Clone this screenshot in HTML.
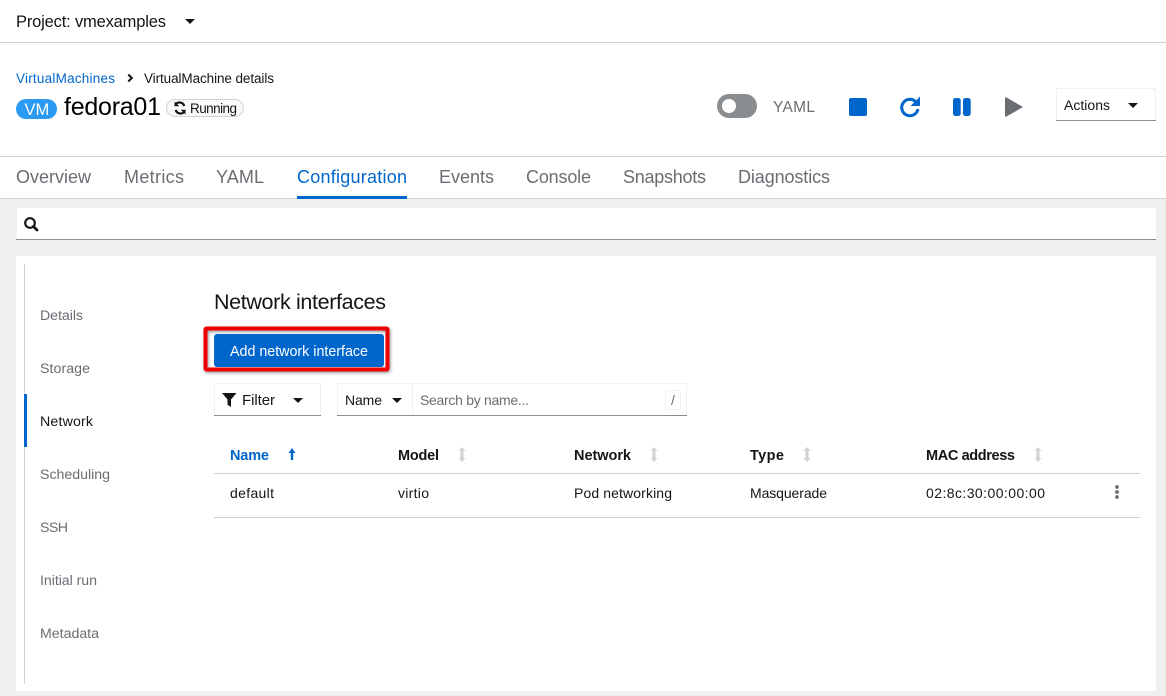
<!DOCTYPE html>
<html><head><meta charset="utf-8"><title>fedora01</title>
<style>
html,body{margin:0;padding:0;background:#fff;width:1166px;height:696px;overflow:hidden}
svg{display:block}
text{font-family:"Liberation Sans",sans-serif;font-size:14px;fill:#151515}
.g{fill:#6a6e73}.b{fill:#0066cc}.h{font-weight:700;font-size:14.500px}
.t{font-size:18px;fill:#6a6e73}.s{font-size:14.200px}
</style></head><body>
<svg width="1166" height="696" viewBox="0 0 1166 696" xmlns="http://www.w3.org/2000/svg">
<defs><filter id="sh" x="-10%" y="-30%" width="120%" height="160%"><feDropShadow dx="1" dy="1.500" stdDeviation="1.500" flood-color="#000" flood-opacity=".4"/></filter></defs>
<rect width="1166" height="696" fill="#fff"/>
<text x="16" y="27" style="font-size:16.500px" textLength="150" lengthAdjust="spacing">Project: vmexamples</text>
<path d="M185 19h10l-5 5z" fill="#151515"/>
<rect y="42" width="1166" height="1" fill="#d2d2d2"/>

<text x="16" y="83" class="b" style="font-size:13.500px" textLength="99" lengthAdjust="spacing">VirtualMachines</text>
<path d="M128.300 74.500l3.500 3.500-3.500 3.500" fill="none" stroke="#151515" stroke-width="2"/>
<text x="144" y="83" style="font-size:13.500px" textLength="130" lengthAdjust="spacing">VirtualMachine details</text>
<rect x="16" y="99" width="41" height="20" rx="10" fill="#2b9af3"/>
<text x="24.500" y="115" style="font-size:16.500px;fill:#fff">VM</text>
<text x="64" y="115" style="font-size:25px;fill:#000" textLength="97" lengthAdjust="spacing">fedora01</text>
<rect x="166.500" y="99.500" width="77" height="17" rx="8.500" fill="#fafafa" stroke="#d2d2d2"/>
<g fill="none" stroke="#151515" stroke-width="2.200">
<path d="M184.300 106a5 5 0 0 0-8.800-1.500"/><path d="M175.700 110a5 5 0 0 0 8.800 1.500"/>
</g>
<path d="M174.500 101.500v4.800h4.800zM185.500 114.500v-4.800h-4.800z" fill="#151515"/>
<text x="190" y="113" style="font-size:13.500px" textLength="47" lengthAdjust="spacing">Running</text>

<rect x="717" y="94" width="40" height="24" rx="12" fill="#8a8d90"/>
<circle cx="729" cy="106" r="7" fill="#fff"/>
<text x="773" y="112" class="g" style="font-size:15.500px" textLength="42" lengthAdjust="spacing">YAML</text>
<rect x="849" y="98" width="18" height="18" rx="2" fill="#0066cc"/>
<path d="M915.500 101.500a8.200 8.200 0 1 0 2.500 7.500" fill="none" stroke="#0066cc" stroke-width="3"/>
<path d="M920 96.500v9.500h-9.500z" fill="#0066cc"/>
<rect x="953" y="98" width="7.700" height="18" rx="2.500" fill="#0066cc"/>
<rect x="963" y="98" width="7.700" height="18" rx="2.500" fill="#0066cc"/>
<path d="M1006.500 97.500c-.8-.4-1.500 0-1.500 1v17c0 1 .7 1.400 1.500 1l16.500-9.500z" fill="#6a6e73"/>
<rect x="1056.500" y="88.500" width="99" height="32" fill="#fff" stroke="#f0f0f0"/>
<rect x="1056" y="120" width="100" height="1" fill="#8a8d90"/>
<text x="1064" y="110" textLength="46" lengthAdjust="spacing">Actions</text>
<path d="M1128 103h10l-5 5z" fill="#151515"/>

<rect y="156" width="1166" height="1" fill="#d2d2d2"/>
<text x="16" y="183" class="t" textLength="75" lengthAdjust="spacing">Overview</text>
<text x="124" y="183" class="t" textLength="60" lengthAdjust="spacing">Metrics</text>
<text x="216" y="183" class="t" textLength="48" lengthAdjust="spacing">YAML</text>
<text x="297" y="183" class="t" style="fill:#0066cc" textLength="110" lengthAdjust="spacing">Configuration</text>
<text x="439" y="183" class="t" textLength="55" lengthAdjust="spacing">Events</text>
<text x="526" y="183" class="t" textLength="65" lengthAdjust="spacing">Console</text>
<text x="623" y="183" class="t" textLength="83" lengthAdjust="spacing">Snapshots</text>
<text x="738" y="183" class="t" textLength="92" lengthAdjust="spacing">Diagnostics</text>

<rect y="198" width="1166" height="498" fill="#f0f0f0"/>
<rect y="198" width="1166" height="1" fill="#d2d2d2"/>
<rect x="297" y="196" width="110" height="3" fill="#0066cc"/>
<rect x="17" y="208" width="1139" height="31" fill="#fff"/>
<rect x="16" y="239" width="1140" height="1" fill="#8a8d90"/>
<circle cx="30" cy="223" r="4.800" fill="none" stroke="#151515" stroke-width="2.200"/>
<path d="M33.500 226.500l3.500 3.500" stroke="#151515" stroke-width="2.800" stroke-linecap="round"/>

<rect x="16" y="256" width="1140" height="435" fill="#fff"/>
<rect x="24" y="264" width="1" height="420" fill="#d2d2d2"/>
<rect x="24" y="394" width="3" height="53" fill="#0066cc"/>
<text x="40" y="320" class="g s" textLength="43" lengthAdjust="spacing">Details</text>
<text x="40" y="373" class="g s" textLength="50" lengthAdjust="spacing">Storage</text>
<text x="40" y="426" class="s" textLength="53" lengthAdjust="spacing">Network</text>
<text x="40" y="479" class="g s" textLength="70" lengthAdjust="spacing">Scheduling</text>
<text x="40" y="532" class="g s" textLength="28" lengthAdjust="spacing">SSH</text>
<text x="40" y="585" class="g s" textLength="57" lengthAdjust="spacing">Initial run</text>
<text x="40" y="638" class="g s" textLength="59" lengthAdjust="spacing">Metadata</text>

<text x="214" y="309" style="font-size:21.500px" textLength="172" lengthAdjust="spacing">Network interfaces</text>
<rect x="205.500" y="328.500" width="182" height="41" rx="1" fill="none" stroke="#ee0000" stroke-width="4" filter="url(#sh)"/>
<rect x="214" y="334" width="170" height="33" rx="3" fill="#0066cc"/>
<text x="230" y="356" style="fill:#fff;font-size:14.300px" textLength="138" lengthAdjust="spacing">Add network interface</text>

<rect x="214.500" y="383.500" width="106" height="32" fill="#fff" stroke="#f0f0f0"/>
<rect x="214" y="415" width="107" height="1" fill="#8a8d90"/>
<path d="M222 393h14.500l-5.500 6.500v7.500l-3.500-2.300v-5.200z" fill="#151515"/>
<text x="242" y="405" style="font-size:15px" textLength="33" lengthAdjust="spacing">Filter</text>
<path d="M293 398h10l-5 5z" fill="#151515"/>
<rect x="337.500" y="383.500" width="349" height="32" fill="#fff" stroke="#f0f0f0"/>
<rect x="412" y="384" width="1" height="31" fill="#f0f0f0"/>
<rect x="337" y="415" width="350" height="1" fill="#8a8d90"/>
<text x="345" y="405" textLength="37" lengthAdjust="spacing">Name</text>
<path d="M392 398h10l-5 5z" fill="#151515"/>
<text x="420" y="405" class="g" textLength="109" lengthAdjust="spacing">Search by name...</text>
<rect x="665.500" y="390.500" width="15" height="19" rx="2" fill="#fff" stroke="#f0f0f0"/>
<text x="673" y="405" class="g" text-anchor="middle">/</text>

<text x="230" y="460" class="h b" textLength="39" lengthAdjust="spacing">Name</text>
<path d="M292 448l3.500 5h-2.300v7h-2.400v-7h-2.300z" fill="#0066cc"/>
<text x="398" y="460" class="h" textLength="41" lengthAdjust="spacing">Model</text>
<text x="574" y="460" class="h" textLength="57" lengthAdjust="spacing">Network</text>
<text x="750" y="460" class="h" textLength="34" lengthAdjust="spacing">Type</text>
<text x="926" y="460" class="h" textLength="89" lengthAdjust="spacing">MAC address</text>
<g fill="#d2d2d2">
<path d="M462 447l3.500 4H463.500v7h2l-3.500 4-3.500-4h2v-7h-2z"/>
<path d="M654 447l3.500 4H655.500v7h2l-3.500 4-3.500-4h2v-7h-2z"/>
<path d="M807 447l3.500 4H808.500v7h2l-3.500 4-3.500-4h2v-7h-2z"/>
<path d="M1038 447l3.500 4H1039.500v7h2l-3.500 4-3.500-4h2v-7h-2z"/>
</g>
<rect x="214" y="473" width="926" height="1" fill="#d2d2d2"/>
<text x="230" y="498" textLength="44" lengthAdjust="spacing">default</text>
<text x="398" y="498" textLength="31" lengthAdjust="spacing">virtio</text>
<text x="574" y="498" textLength="98" lengthAdjust="spacing">Pod networking</text>
<text x="750" y="498" textLength="77" lengthAdjust="spacing">Masquerade</text>
<text x="926" y="498" textLength="119" lengthAdjust="spacing">02:8c:30:00:00:00</text>
<g fill="#6a6e73"><circle cx="1117" cy="487" r="1.900"/><circle cx="1117" cy="492" r="1.900"/><circle cx="1117" cy="497" r="1.900"/></g>
<rect x="214" y="517" width="926" height="1" fill="#d2d2d2"/>
</svg>
</body></html>
